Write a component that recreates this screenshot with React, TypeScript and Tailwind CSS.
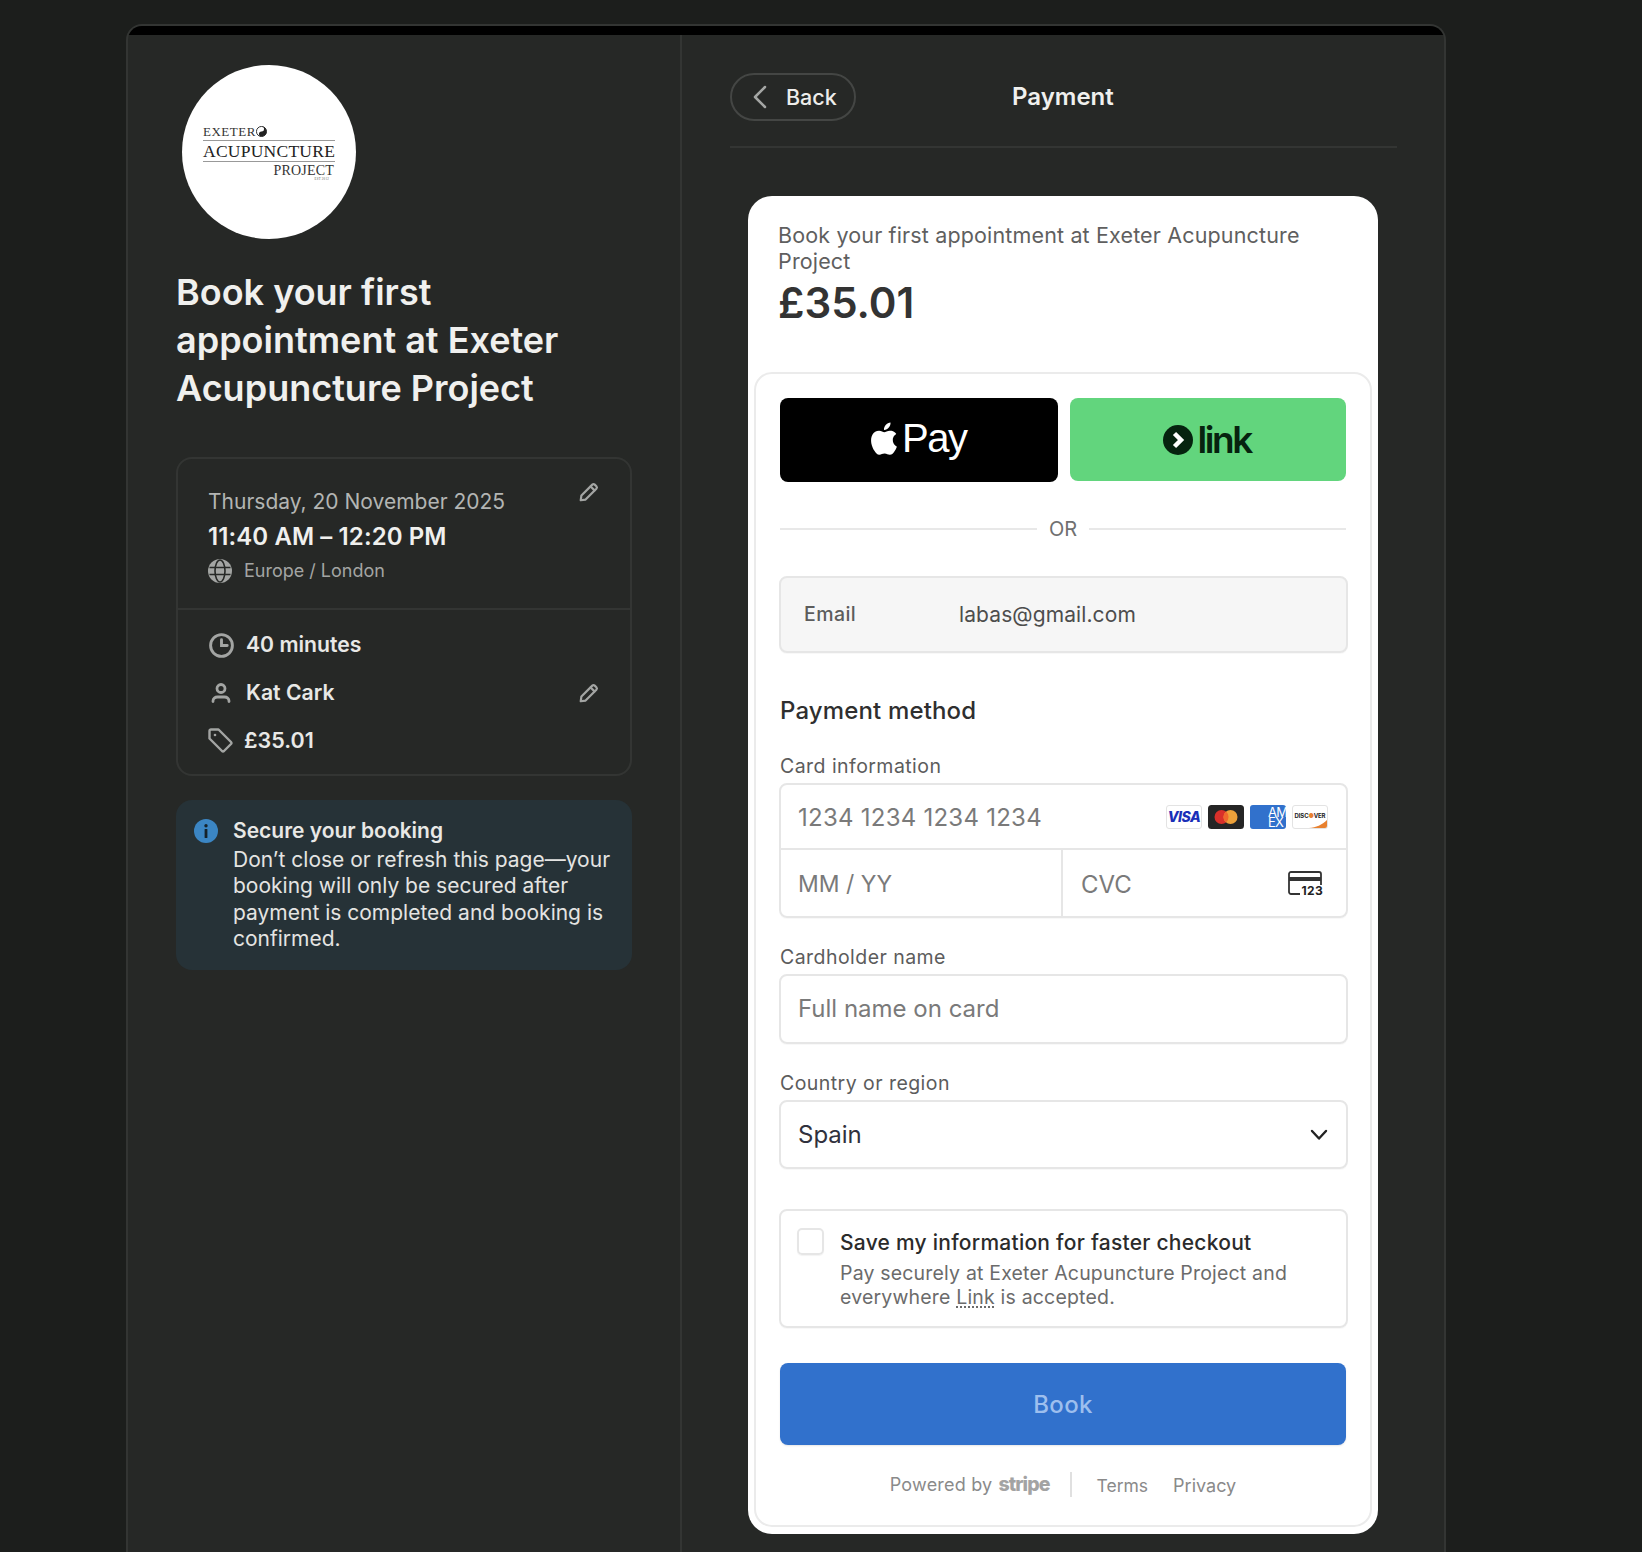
import React from "react";

const Pencil = () => (
  <svg width="22" height="22" viewBox="0 0 20 20" fill="none" stroke="#a3a5a3" strokeWidth="2" strokeLinejoin="round" strokeLinecap="round">
    <path d="M2.500 17.500l.6-4.400L13 3.300a1.600 1.600 0 0 1 2.200 0l1.500 1.500a1.600 1.600 0 0 1 0 2.200L6.900 16.900l-4.400.6z" />
    <path d="M11.500 5l3.500 3.500" />
  </svg>
);

const Label = ({ children }: { children: React.ReactNode }) => (
  <div className="text-[19.5px] leading-[24px] text-[#5c5c5c] tracking-[0.45px] pl-[23px]">{children}</div>
);

const Visa = () => (
  <div className="w-[36px] h-[24px] rounded-[3px] border border-[#e3e3e3] bg-white flex items-center justify-center">
    <span className="text-[14px] font-extrabold italic text-[#1a2fb8] tracking-[-0.5px] leading-none">VISA</span>
  </div>
);
const Master = () => (
  <svg width="36" height="24" viewBox="0 0 36 24">
    <rect width="36" height="24" rx="3.500" fill="#252525" />
    <circle cx="13.500" cy="12" r="7" fill="#d9302a" />
    <circle cx="22.500" cy="12" r="7" fill="#eda13a" />
    <path d="M18 6.600a7 7 0 0 1 0 10.800 7 7 0 0 1 0-10.800z" fill="#f0682c" />
  </svg>
);
const Amex = () => (
  <div className="w-[36px] h-[24px] rounded-[3px] bg-[#3171cc] overflow-hidden flex flex-col items-start justify-center pl-[18px]">
    <span className="text-[13px] leading-[10px] text-white tracking-[-0.8px] whitespace-nowrap">AM</span>
    <span className="text-[13px] leading-[10px] text-white tracking-[-0.8px] whitespace-nowrap">EX</span>
  </div>
);
const Discover = () => (
  <div className="relative w-[36px] h-[24px] rounded-[3px] border border-[#e3e3e3] bg-white overflow-hidden flex items-center justify-center">
    <svg className="absolute right-0 bottom-0" width="18" height="8" viewBox="0 0 18 8"><path d="M18 0v8H0C7 7.500 13 5 18 0z" fill="#e8812f" /></svg>
    <span className="relative text-[6px] font-bold text-[#222] leading-none whitespace-nowrap tracking-[-0.1px] mb-[2px]">DISC<span className="text-[#e8812f]">●</span>VER</span>
  </div>
);

export default function App() {
  return (
    <div className="h-[1552px] overflow-hidden bg-[#1c1e1c] pt-[24px] pl-[126px] text-[#ededeb]" style={{ fontFamily: "Inter, sans-serif" }}>
      <div className="w-[1320px] h-[1560px] rounded-t-[16px] border-x-2 border-t-2 border-[#333533] bg-[#262826] overflow-hidden">
        <div className="h-[9px] bg-black" />
        <div className="flex">
          <div className="w-[554px] h-[1530px] border-r-2 border-[#333533] pl-[48px] pr-[48px]">
            <div className="w-[174px] h-[174px] ml-[6px] mt-[30px] rounded-full bg-white flex flex-col justify-center items-center text-[#222]" style={{ fontFamily: "'Liberation Serif', serif" }}>
              <div className="w-[132px] mt-[1px]">
                <div className="text-[13px] leading-[14px] tracking-[0.5px] text-[#333] flex items-center">EXETER
                  <svg width="11" height="11" viewBox="0 0 12 12"><circle cx="6" cy="6" r="5.500" fill="#fff" stroke="#222" /><path d="M6 .5a5.500 5.500 0 0 1 0 11 2.750 2.750 0 0 1 0-5.500 2.750 2.750 0 0 0 0-5.500z" fill="#222" /></svg>
                </div>
                <div className="text-[17.500px] leading-[20px] border-y border-[#999] text-center whitespace-nowrap tracking-[0.25px] mt-[1px]">ACUPUNCTURE</div>
                <div className="text-[14px] leading-[15px] text-right pr-[1px] tracking-[0.2px] text-[#333] mt-[1px]">PROJECT</div>
                <div className="text-[3px] leading-[3px] text-right pr-[6px] tracking-[0.3px] text-[#555]">EST 2012</div>
              </div>
            </div>
            <h1 className="mt-[29px] text-[36px] leading-[48px] font-semibold text-[#f0f0ee]">Book your first appointment at Exeter Acupuncture Project</h1>
            <div className="mt-[45px] h-[319px] rounded-[16px] border-2 border-[#333533]">
              <div className="relative h-[151px] border-b-2 border-[#333533] pl-[30px] pt-[27px]">
                <div className="text-[21px] leading-[32px] text-[#b3b5b3]">Thursday, 20 November 2025</div>
                <div className="text-[24px] leading-[36px] tracking-[0.1px] font-semibold text-[#f0f0ee] mt-[1px]">11:40 AM – 12:20 PM</div>
                <div className="flex items-center gap-[12px] mt-[2px] text-[18px] leading-[28px] text-[#a3a5a3]">
                  <svg width="24" height="24" viewBox="0 0 24 24" fill="#a3a5a3"><circle cx="12" cy="12" r="12" /><g fill="none" stroke="#262826" strokeWidth="1.600"><ellipse cx="12" cy="12" rx="5" ry="11" /><path d="M1.500 8.500h21M1.500 15.500h21" /></g></svg>
                  <span>Europe / London</span>
                </div>
                <div className="absolute right-[30px] top-[22px]"><Pencil /></div>
              </div>
              <div className="pl-[30px] pt-[11px] pr-[30px]">
                <div className="flex items-center h-[48px] text-[21.200px] font-semibold text-[#e8e8e6]">
                  <svg className="mr-[11px]" width="27" height="27" viewBox="0 0 26 26" fill="none" stroke="#a3a5a3" strokeWidth="2.800" strokeLinecap="round"><circle cx="13" cy="13" r="10.500" /><path d="M13 7.500V13h5.500" /></svg>
                  40 minutes
                </div>
                <div className="flex items-center h-[48px] text-[21.200px] font-semibold text-[#e8e8e6]">
                  <svg className="mr-[12px]" width="26" height="26" viewBox="0 0 26 26" fill="none" stroke="#a3a5a3" strokeWidth="2.800" strokeLinecap="round"><circle cx="13" cy="8.500" r="4" /><path d="M5 21.500v-.5c0-2.500 2-4 4.500-4h7c2.500 0 4.500 1.500 4.500 4v.5" /></svg>
                  <span className="flex-1">Kat Cark</span>
                  <Pencil />
                </div>
                <div className="flex items-center h-[47px] text-[21.500px] font-semibold text-[#e8e8e6]">
                  <svg className="mr-[11px]" width="25" height="25" viewBox="0 0 25 25" fill="none" stroke="#a3a5a3" strokeWidth="2.400" strokeLinejoin="round"><path d="M1.500 3a1.500 1.500 0 0 1 1.500-1.500h7.500L23 14a1.500 1.500 0 0 1 0 2l-7 7a1.500 1.500 0 0 1-2 0L1.500 10.500V3z" /><circle cx="7" cy="7" r="1.300" fill="#a3a5a3" stroke="none" /></svg>
                  £35.01
                </div>
              </div>
            </div>
            <div className="mt-[24px] rounded-[16px] bg-[#263237] flex pt-[17px] pb-[18px] pl-[18px] pr-[20px]">
              <svg className="shrink-0 mt-[2px] mr-[15px]" width="24" height="24" viewBox="0 0 24 24"><circle cx="12" cy="12" r="12" fill="#3b86c4" /><circle cx="12" cy="6.700" r="1.700" fill="#16232b" /><rect x="10.600" y="10" width="2.800" height="9" rx="0.500" fill="#16232b" /></svg>
              <div>
                <div className="text-[21px] leading-[28px] font-semibold text-[#e8e8e6]">Secure your booking</div>
                <div className="text-[21px] leading-[26.300px] text-[#e4e4e2] mt-[2px]">Don’t close or refresh this page—your booking will only be secured after payment is completed and booking is confirmed.</div>
              </div>
            </div>
          </div>
          <div className="flex-1 pl-[48px] pr-[47px]">
            <div className="relative h-[113px] border-b-2 border-[#333533] flex items-start">
              <div className="mt-[38px] w-[126px] h-[48px] rounded-full border-2 border-[#444644] flex items-center pl-[20px] text-[21.500px] font-medium text-[#ededeb]">
                <svg className="mr-[17px]" width="17" height="24" viewBox="0 0 17 24" fill="none" stroke="#a3a5a3" strokeWidth="2.500" strokeLinecap="round" strokeLinejoin="round"><path d="M13 2L3 12l10 10" /></svg>
                Back
              </div>
              <div className="absolute left-[282px] top-[44px] text-[24px] leading-[36px] font-semibold text-[#f0f0ee]">Payment</div>
            </div>
            <div className="ml-[18px] mt-[48px] w-[630px] h-[1338px] rounded-[24px] bg-white px-[7px] pb-[7px] flex flex-col text-[#30313d]">
              <div className="h-[176px] pl-[23px] pt-[26px] shrink-0">
                <div className="text-[21.500px] leading-[26px] text-[#5f5f5f] tracking-[0.15px]">Book your first appointment at Exeter Acupuncture Project</div>
                <div className="text-[42px] leading-[50px] font-semibold text-[#333] mt-[4px]">£35.01</div>
              </div>
              <div className="flex-1 -mx-[1px] pl-[1px] pr-[1px] rounded-[18px] border-2 border-[#ebebeb] pt-[24px]">
                <div className="flex gap-[12px] px-[23px]">
                  <div className="flex-1 h-[84px] rounded-[8px] bg-black flex items-center justify-center text-white text-[40px] tracking-[-1.500px] gap-[4px] pr-[3px]">
                    <svg width="30" height="36" viewBox="0 0 30 36" fill="#fff" className="mb-[3px]"><path d="M24.800 18.900c0-4 3.300-5.900 3.500-6-1.900-2.800-4.800-3.200-5.900-3.200-2.500-.3-4.900 1.500-6.100 1.500-1.300 0-3.200-1.500-5.300-1.400-2.700 0-5.200 1.600-6.600 4-2.800 4.900-.7 12.100 2 16 1.300 1.900 2.900 4.100 5 4 2-.1 2.800-1.300 5.200-1.300s3.100 1.300 5.200 1.300c2.200 0 3.600-2 4.900-3.900 1.500-2.200 2.200-4.400 2.200-4.500-.1 0-4.100-1.600-4.100-6.500zM20.800 6.600c1.100-1.400 1.900-3.200 1.700-5.100-1.600.1-3.600 1.100-4.800 2.500-1 1.200-2 3.100-1.700 4.900 1.800.1 3.600-.9 4.800-2.300z" /></svg>
                    <span className="font-normal leading-none pb-[4px]" style={{ fontFamily: "'Liberation Sans', sans-serif" }}>Pay</span>
                  </div>
                  <div className="flex-1 h-[83px] rounded-[8px] bg-[#62d57d] flex items-center justify-center gap-[5px] pr-[2px]">
                    <svg width="30" height="30" viewBox="0 0 30 30"><circle cx="15" cy="15" r="15" fill="#06230f" /><path d="M11.500 8.500L18 15l-6.500 6.500" fill="none" stroke="#fff" strokeWidth="4.500" /></svg>
                    <span className="text-[37px] leading-none font-semibold text-[#06230f] tracking-[-2.400px]">link</span>
                  </div>
                </div>
                <div className="flex items-center gap-[12px] px-[23px] mt-[35px]">
                  <div className="flex-1 h-[2px] bg-[#e8e8e8]" />
                  <span className="text-[20px] leading-[24px] text-[#707070]">OR</span>
                  <div className="flex-1 h-[2px] bg-[#e8e8e8]" />
                </div>
                <div className="ml-[22px] mr-[21px] mt-[35px] h-[77px] rounded-[8px] border-2 border-[#e6e6e6] bg-[#f6f6f6] shadow-[0_1px_1px_rgba(0,0,0,0.03)] flex items-center pl-[23px]">
                  <span className="w-[155px] font-medium text-[#5c5c5c] text-[19.500px] tracking-[0.45px]">Email</span>
                  <span className="text-[#4d4d4d] text-[21px] tracking-[0.1px]">labas@gmail.com</span>
                </div>
                <div className="pl-[23px] mt-[40px] text-[24px] leading-[36px] font-medium text-[#2f2f2f] tracking-[0.15px]">Payment method</div>
                <div className="mt-[25px]"><Label>Card information</Label></div>
                <div className="ml-[22px] mr-[21px] mt-[5px] h-[135px] rounded-[8px] border-2 border-[#e6e6e6] shadow-[0_1px_1px_rgba(0,0,0,0.03)] flex flex-col text-[24px] text-[#7a7a7a]">
                  <div className="h-[65px] border-b-2 border-[#e6e6e6] flex items-center justify-between pl-[17px] pr-[18px]">
                    <span className="tracking-[0.25px] pt-[3px]">1234 1234 1234 1234</span>
                    <div className="flex gap-[6px]"><Visa /><Master /><Amex /><Discover /></div>
                  </div>
                  <div className="flex-1 flex">
                    <div className="w-[282px] border-r-2 border-[#e6e6e6] flex items-center pl-[17px] pt-[3px] text-[23px]">MM / YY</div>
                    <div className="flex-1 flex items-center justify-between pl-[18px] pr-[24px]">
                      <span className="pt-[3px]">CVC</span>
                      <div className="relative w-[34px] h-[26px] mt-[2px]">
                        <svg width="34" height="24" viewBox="0 0 34 24" fill="none" stroke="#333" strokeWidth="1.800"><path d="M12 23H3a2 2 0 0 1-2-2V3a2 2 0 0 1 2-2h28a2 2 0 0 1 2 2v11" /><path d="M1 8h32" strokeWidth="4" /></svg>
                        <span className="absolute right-[-1px] bottom-[-1px] text-[12px] leading-[14px] font-bold text-[#222] tracking-[0.3px]">123</span>
                      </div>
                    </div>
                  </div>
                </div>
                <div className="mt-[27px]"><Label>Cardholder name</Label></div>
                <div className="ml-[22px] mr-[21px] mt-[5px] h-[70px] rounded-[8px] border-2 border-[#e6e6e6] shadow-[0_1px_1px_rgba(0,0,0,0.03)] flex items-center pl-[17px] text-[24px] text-[#7a7a7a]">Full name on card</div>
                <div className="mt-[27px]"><Label>Country or region</Label></div>
                <div className="ml-[22px] mr-[21px] mt-[5px] h-[69px] rounded-[8px] border-2 border-[#e6e6e6] shadow-[0_1px_1px_rgba(0,0,0,0.03)] flex items-center justify-between pl-[17px] pr-[17px] text-[24px] text-[#30313d]">
                  <span className="pt-[1px]">Spain</span>
                  <svg width="20" height="12" viewBox="0 0 20 12" fill="none" stroke="#222" strokeWidth="2.400" strokeLinecap="round" strokeLinejoin="round"><path d="M3 2l7 7.500L17 2" /></svg>
                </div>
                <div className="ml-[22px] mr-[21px] mt-[40px] h-[119px] rounded-[8px] border-2 border-[#e6e6e6] shadow-[0_1px_1px_rgba(0,0,0,0.03)] flex pl-[16px] pt-[17px]">
                  <div className="w-[27px] h-[27px] rounded-[5px] border-2 border-[#e6e6e6] shadow-[0_1px_1px_rgba(0,0,0,0.05)] shrink-0" />
                  <div className="ml-[16px]">
                    <div className="text-[21px] leading-[30px] font-medium text-[#2b2b2b] tracking-[0.25px]">Save my information for faster checkout</div>
                    <div className="text-[19.500px] leading-[24px] text-[#6b6b6b] mt-[3px] tracking-[0.18px]">Pay securely at Exeter Acupuncture Project and everywhere <span className="underline decoration-dotted underline-offset-[3px]">Link</span> is accepted.</div>
                  </div>
                </div>
                <div className="mx-[23px] mt-[35px] h-[82px] rounded-[8px] bg-[#3171cc] shadow-[0_1px_2px_rgba(0,0,0,0.1)] flex items-center justify-center pt-[1px] text-[24px] text-[#9dbfee] font-medium tracking-[0.3px]">Book</div>
                <div className="mt-[25px] flex items-center justify-center text-[#8a8a8a] text-[18px]">
                  <span className="tracking-[0.2px]">Powered by</span>
                  <span className="ml-[6px] font-extrabold text-[#a3a3a3] tracking-[-0.9px] text-[19.500px]">stripe</span>
                  <div className="w-[2px] h-[25px] bg-[#e0e0e0] ml-[20px] mr-[25px]" />
                  <span className="pt-[2px] text-[17.500px]">Terms</span>
                  <span className="ml-[25px] pt-[2px]">Privacy</span>
                </div>
              </div>
            </div>
          </div>
        </div>
      </div>
    </div>
  );
}
